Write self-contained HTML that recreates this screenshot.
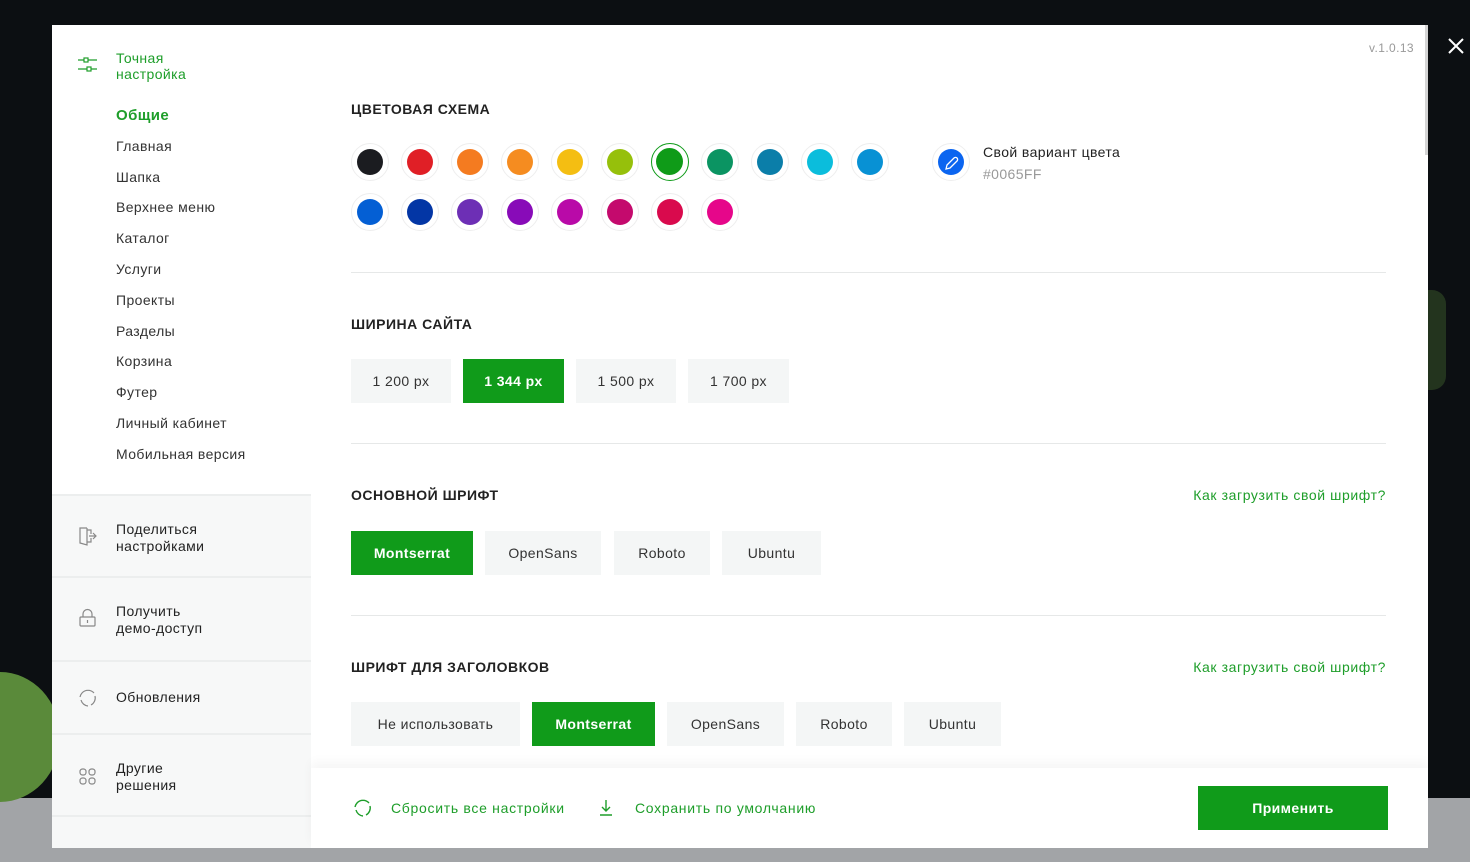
<!DOCTYPE html>
<html><head><meta charset="utf-8"><style>
*{box-sizing:border-box;margin:0;padding:0}
body{width:1470px;height:862px;overflow:hidden;background:#0c0f12;font-family:"Liberation Sans","Noto Sans CJK SC",sans-serif;position:relative;color:#222;letter-spacing:.4px}
.bot{position:absolute;left:0;top:798px;width:1470px;height:64px;background:#a2a4a7}
.blob{position:absolute;left:-60px;top:672px;width:120px;height:130px;border-radius:50%;background:#5a8a3a}
.blob2{position:absolute;left:1410px;top:290px;width:36px;height:100px;border-radius:14px;background:#2e4424;opacity:.7}
.modal{position:absolute;left:52px;top:25px;width:1376px;height:823px;background:#fff;overflow:hidden}
.side{position:absolute;left:0;top:0;width:259px;height:823px}
.lower{position:absolute;left:0;top:469px;width:259px;height:354px;background:#f7f8f8}
.sitem{position:absolute;left:0;width:259px;border-top:2px solid #eceeee;font-size:14px;line-height:17px;color:#222}
.sitem span{position:absolute;left:64px}
.sitem svg{position:absolute;left:26px}
.t{position:absolute;font-size:14px;white-space:nowrap}
.nav{position:absolute;left:64px;font-size:14px;color:#333}
.h{position:absolute;left:299px;font-size:14px;font-weight:bold;letter-spacing:.5px;color:#222}
.div{position:absolute;left:299px;width:1035px;height:1px;background:#e6e8e8}
.b{position:absolute;height:44px;background:#f4f6f6;font-size:14px;line-height:44px;text-align:center;color:#333}
.b.g{background:#109b1a;color:#fff;font-weight:bold}
.c{position:absolute;width:38px;height:38px;border-radius:50%;border:1px solid #eee;background:#fff}
.c i{position:absolute;left:5px;top:5px;width:26px;height:26px;border-radius:50%}
.lnk{position:absolute;right:42px;font-size:14px;color:#1e9e2a;letter-spacing:.6px}
.foot{position:absolute;left:259px;top:743px;width:1117px;height:80px;background:#fff;box-shadow:0 -6px 10px rgba(0,0,0,.04)}
</style></head><body>
<div class="bot"></div><div class="blob"></div><div class="blob2"></div>
<svg style="position:absolute;left:1447px;top:37px" width="18" height="18"><path d="M2 2L16 16M16 2L2 16" stroke="#fff" stroke-width="2"/></svg>
<div class="modal">
<div class="side">
<svg style="position:absolute;left:26px;top:31px" width="20" height="18" fill="none" stroke="#1e9e2a" stroke-width="1.2"><path d="M0 4H6M10 4H19M0 13H9M13 13H19"/><rect x="6" y="2" width="4" height="4"/><rect x="9" y="11" width="4" height="4"/></svg>
<div class="t" style="left:64px;top:25px;color:#1e9e2a;line-height:16px">Точная<br>настройка</div>
<div class="nav" style="top:82px;color:#1e9e2a;font-weight:bold;font-size:15px">Общие</div>
<div class="nav" style="top:113px">Главная</div>
<div class="nav" style="top:144px">Шапка</div>
<div class="nav" style="top:174px">Верхнее меню</div>
<div class="nav" style="top:205px">Каталог</div>
<div class="nav" style="top:236px">Услуги</div>
<div class="nav" style="top:267px">Проекты</div>
<div class="nav" style="top:298px">Разделы</div>
<div class="nav" style="top:328px">Корзина</div>
<div class="nav" style="top:359px">Футер</div>
<div class="nav" style="top:390px">Личный кабинет</div>
<div class="nav" style="top:421px">Мобильная версия</div>
<div class="lower">
<div class="sitem" style="top:0;height:82px"><svg style="top:30px" width="20" height="20" fill="none" stroke="#888" stroke-width="1.2"><path d="M9 2H2V17L9 19V2M9 4H13V8M13 12V16H9M11 10H18M15 7L18 10L15 13"/></svg><span style="top:25px">Поделиться<br>настройками</span></div>
<div class="sitem" style="top:82px;height:84px"><svg style="top:30px" width="20" height="20" fill="none" stroke="#888" stroke-width="1.2"><rect x="2" y="9" width="15" height="9" rx="1"/><path d="M5 9V6A4.5 4.5 0 0 1 14 6V9M9.5 12V15"/></svg><span style="top:25px">Получить<br>демо-доступ</span></div>
<div class="sitem" style="top:166px;height:73px"><svg style="top:26px" width="20" height="20" fill="none" stroke="#888" stroke-width="1.2"><path d="M4 5A8 8 0 0 1 16 5M17 8A8 8 0 0 1 13 17M10 18A8 8 0 0 1 3 12M2 9A8 8 0 0 1 4 5"/></svg><span style="top:27px">Обновления</span></div>
<div class="sitem" style="top:239px;height:82px"><svg style="top:32px" width="20" height="20" fill="none" stroke="#888" stroke-width="1.2"><rect x="2" y="2" width="6" height="6" rx="2.5"/><rect x="11" y="2" width="6" height="6" rx="2.5"/><rect x="2" y="11" width="6" height="6" rx="2.5"/><rect x="11" y="11" width="6" height="6" rx="2.5"/></svg><span style="top:25px">Другие<br>решения</span></div>
<div class="sitem" style="top:321px;height:40px"></div>
</div>
</div>
<div style="position:absolute;left:1373px;top:0;width:3px;height:130px;background:#d4d4d4"></div>
<div class="t" style="left:1317px;top:16px;font-size:12px;color:#999">v.1.0.13</div>
<div class="h" style="top:76px">ЦВЕТОВАЯ СХЕМА</div>
<div class="c" style="left:299px;top:118px"><i style="background:#1b1c20"></i></div>
<div class="c" style="left:349px;top:118px"><i style="background:#e01f26"></i></div>
<div class="c" style="left:399px;top:118px"><i style="background:#f47b20"></i></div>
<div class="c" style="left:449px;top:118px"><i style="background:#f58c20"></i></div>
<div class="c" style="left:499px;top:118px"><i style="background:#f4be12"></i></div>
<div class="c" style="left:549px;top:118px"><i style="background:#96c00b"></i></div>
<div class="c" style="left:599px;top:118px;border:1.5px solid #109b1a"><i style="background:#0f9b18;left:4px;top:4px;width:27px;height:27px"></i></div>
<div class="c" style="left:649px;top:118px"><i style="background:#0b9462"></i></div>
<div class="c" style="left:699px;top:118px"><i style="background:#0b7ea9"></i></div>
<div class="c" style="left:749px;top:118px"><i style="background:#0bbddc"></i></div>
<div class="c" style="left:799px;top:118px"><i style="background:#0891d4"></i></div>
<div class="c" style="left:299px;top:168px"><i style="background:#045fd4"></i></div>
<div class="c" style="left:349px;top:168px"><i style="background:#0336a5"></i></div>
<div class="c" style="left:399px;top:168px"><i style="background:#6d2fb5"></i></div>
<div class="c" style="left:449px;top:168px"><i style="background:#880bb8"></i></div>
<div class="c" style="left:499px;top:168px"><i style="background:#b90aa8"></i></div>
<div class="c" style="left:549px;top:168px"><i style="background:#c40a6d"></i></div>
<div class="c" style="left:599px;top:168px"><i style="background:#d90a4d"></i></div>
<div class="c" style="left:649px;top:168px"><i style="background:#e6068a"></i></div>
<div class="c" style="left:880px;top:118px"><i style="background:#0b65f0"></i><svg style="position:absolute;left:11px;top:11px" width="16" height="16" fill="none" stroke="#fff" stroke-width="1.3"><path d="M2 14L3 10L10 3A2 2 0 0 1 13 6L6 13Z"/></svg></div>
<div class="t" style="left:931px;top:119px;color:#222">Свой вариант цвета</div>
<div class="t" style="left:931px;top:141px;color:#999">#0065FF</div>
<div class="div" style="top:247px"></div>
<div class="h" style="top:291px">ШИРИНА САЙТА</div>
<div class="b" style="left:299px;top:334px;width:100px">1 200 px</div>
<div class="b g" style="left:411px;top:334px;width:101px">1 344 px</div>
<div class="b" style="left:524px;top:334px;width:100px">1 500 px</div>
<div class="b" style="left:636px;top:334px;width:101px">1 700 px</div>
<div class="div" style="top:418px"></div>
<div class="h" style="top:462px">ОСНОВНОЙ ШРИФТ</div>
<div class="lnk" style="top:462px">Как загрузить свой шрифт?</div>
<div class="b g" style="left:299px;top:506px;width:122px">Montserrat</div>
<div class="b" style="left:433px;top:506px;width:116px">OpenSans</div>
<div class="b" style="left:562px;top:506px;width:96px">Roboto</div>
<div class="b" style="left:670px;top:506px;width:99px">Ubuntu</div>
<div class="div" style="top:590px"></div>
<div class="h" style="top:634px">ШРИФТ ДЛЯ ЗАГОЛОВКОВ</div>
<div class="lnk" style="top:634px">Как загрузить свой шрифт?</div>
<div class="b" style="left:299px;top:677px;width:169px">Не использовать</div>
<div class="b g" style="left:480px;top:677px;width:123px">Montserrat</div>
<div class="b" style="left:615px;top:677px;width:117px">OpenSans</div>
<div class="b" style="left:744px;top:677px;width:96px">Roboto</div>
<div class="b" style="left:852px;top:677px;width:97px">Ubuntu</div>
<div class="foot">
<svg style="position:absolute;left:42px;top:30px" width="20" height="20" fill="none" stroke="#1e9e2a" stroke-width="1.4"><path d="M4 5A8 8 0 0 1 16 5M17 8A8 8 0 0 1 13 17M10 18A8 8 0 0 1 3 12M2 9A8 8 0 0 1 4 5"/></svg>
<div class="t" style="left:80px;top:32px;color:#1e9e2a;letter-spacing:.7px">Сбросить все настройки</div>
<svg style="position:absolute;left:287px;top:31px" width="16" height="18" fill="none" stroke="#1e9e2a" stroke-width="1.4"><path d="M8 1V12M4 8L8 12L12 8M2 16H14"/></svg>
<div class="t" style="left:324px;top:32px;color:#1e9e2a;letter-spacing:.7px">Сохранить по умолчанию</div>
<div class="b g" style="left:887px;top:18px;width:190px;height:44px;line-height:44px;background:#109b1a">Применить</div>
</div>
</div>
</body></html>
